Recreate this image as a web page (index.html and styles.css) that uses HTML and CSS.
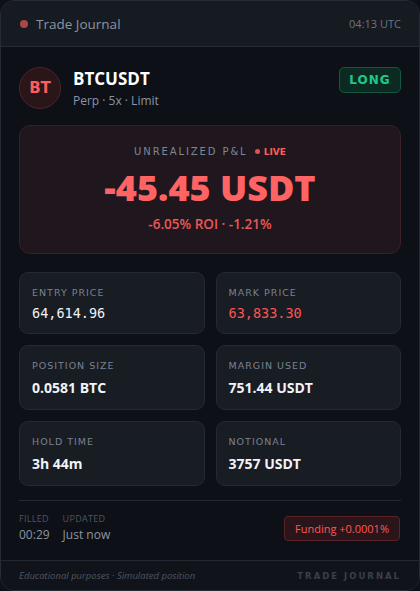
FILE: index.html
```html
<!DOCTYPE html>
<html lang="en">
<head>
    <meta charset="UTF-8">
    <meta name="viewport" content="width=device-width, initial-scale=1.0">
    <title>Trade Journal</title>
    <link rel="stylesheet" href="styles.css">
</head>
<body>
    <div class="journal">
        <div class="topbar">
            <div class="brand"><span class="brand-dot"></span>Trade Journal</div>
            <div class="clock">04:13 UTC</div>
        </div>

        <div class="content">
            <div class="pair-row">
                <div class="pair">
                    <div class="avatar">BT</div>
                    <div>
                        <div class="symbol">BTCUSDT</div>
                        <div class="meta">Perp · 5x · Limit</div>
                    </div>
                </div>
                <div class="side">LONG</div>
            </div>

            <div class="pnl">
                <div class="pnl-label">UNREALIZED P&amp;L <span class="live"><span class="live-dot"></span>LIVE</span></div>
                <div class="pnl-value">-45.45 USDT</div>
                <div class="pnl-sub">-6.05% ROI · -1.21%</div>
            </div>

            <div class="stats">
                <div class="stat">
                    <div class="stat-label">ENTRY PRICE</div>
                    <div class="stat-value mono">64,614.96</div>
                </div>
                <div class="stat">
                    <div class="stat-label">MARK PRICE</div>
                    <div class="stat-value mono down">63,833.30</div>
                </div>
                <div class="stat">
                    <div class="stat-label">POSITION SIZE</div>
                    <div class="stat-value">0.0581 BTC</div>
                </div>
                <div class="stat">
                    <div class="stat-label">MARGIN USED</div>
                    <div class="stat-value">751.44 USDT</div>
                </div>
                <div class="stat">
                    <div class="stat-label">HOLD TIME</div>
                    <div class="stat-value">3h 44m</div>
                </div>
                <div class="stat">
                    <div class="stat-label">NOTIONAL</div>
                    <div class="stat-value">3757 USDT</div>
                </div>
            </div>

            <div class="times">
                <div class="time-list">
                    <div>
                        <div class="time-label">FILLED</div>
                        <div class="time-value">00:29</div>
                    </div>
                    <div>
                        <div class="time-label">UPDATED</div>
                        <div class="time-value">Just now</div>
                    </div>
                </div>
                <div class="funding">Funding +0.0001%</div>
            </div>
        </div>

        <div class="bottombar">
            <div class="disclaimer">Educational purposes · Simulated position</div>
            <div class="mark">TRADE JOURNAL</div>
        </div>
    </div>
</body>
</html>
```

FILE: styles.css
```css
body {
    margin: 0;
    background-color: #0d1017;
    font-family: "Open Sans", "Noto Sans", sans-serif;
    color: #e8ecf1;
}
.journal {
    height: 589px;
    border: 1px solid #262b34;
    border-radius: 14px;
    overflow: hidden;
    background-color: #0d1017;
    display: flex;
    flex-direction: column;
}
.topbar {
    height: 45px;
    padding: 0 18px 0 19px;
    background-color: #161a21;
    border-bottom: 1px solid #252a33;
    display: flex;
    align-items: center;
    justify-content: space-between;
}
.brand {
    display: flex;
    align-items: center;
    font-size: 13.5px;
    color: #8c94a1;
}
.brand-dot {
    width: 8px;
    height: 8px;
    border-radius: 50%;
    background-color: #a84848;
    margin-right: 8px;
}
.clock {
    font-size: 11px;
    color: #6c7480;
}
.content {
    flex: 1;
    padding: 20px 18px 0 18px;
}
.pair-row {
    display: flex;
    justify-content: space-between;
    align-items: flex-start;
}
.pair {
    display: flex;
    align-items: center;
}
.avatar {
    width: 40px;
    height: 40px;
    border-radius: 50%;
    background-color: #2a1519;
    border: 1px solid #4b2629;
    color: #ff5c5c;
    font-family: "DejaVu Sans", sans-serif;
    font-weight: bold;
    font-size: 15px;
    display: flex;
    align-items: center;
    justify-content: center;
    margin-right: 12px;
}
.symbol {
    font-size: 17px;
    font-weight: 700;
    color: #ffffff;
    line-height: 22px;
}
.meta {
    font-size: 12px;
    color: #8c94a1;
    margin-top: 2px;
}
.side {
    width: 60px;
    height: 24px;
    border: 1px solid #14573f;
    background-color: #0b2b22;
    border-radius: 5px;
    color: #1fc88a;
    font-family: "DejaVu Sans", sans-serif;
    font-weight: bold;
    font-size: 12px;
    letter-spacing: 1px;
    display: flex;
    align-items: center;
    justify-content: center;
}
.pnl {
    margin-top: 16px;
    height: 129px;
    border: 1px solid #3a2026;
    border-radius: 11px;
    background-color: #1f171d;
    text-align: center;
    box-sizing: border-box;
    padding-top: 19px;
}
.pnl-label {
    font-family: "DejaVu Sans", sans-serif;
    font-size: 10px;
    letter-spacing: 1.9px;
    color: #7d8796;
    line-height: 14px;
}
.live {
    letter-spacing: 0;
    color: #ff5c5c;
    font-weight: bold;
    font-size: 9px;
    margin-left: 2px;
}
.live-dot {
    display: inline-block;
    width: 5px;
    height: 5px;
    border-radius: 50%;
    background-color: #e05353;
    margin-right: 4px;
    vertical-align: 1px;
}
.pnl-value {
    font-size: 36px;
    font-weight: 800;
    color: #ff6363;
    line-height: 44px;
    margin-top: 7px;
}
.pnl-sub {
    font-size: 13.5px;
    font-weight: 600;
    color: #ea5757;
    margin-top: 5px;
}
.stats {
    margin-top: 18px;
    display: grid;
    grid-template-columns: 1fr 1fr;
    gap: 11px;
}
.stat {
    border: 1px solid #242932;
    border-radius: 9px;
    background-color: #181c23;
    padding: 13px 12px 12px 12px;
}
.stat-label {
    font-family: "DejaVu Sans", sans-serif;
    font-size: 9.5px;
    letter-spacing: 1px;
    color: #7a8290;
    line-height: 14px;
}
.stat-value {
    margin-top: 6px;
    font-size: 14px;
    font-weight: 700;
    color: #f0f3f7;
    line-height: 18px;
}
.mono {
    font-family: "DejaVu Sans Mono", monospace;
    font-weight: normal;
    font-size: 13.5px;
    line-height: 16px;
    margin-top: 5px;
}
.down {
    color: #ff5252;
}
.times {
    margin-top: 14px;
    border-top: 1px solid #232831;
    padding-top: 12px;
    display: flex;
    justify-content: space-between;
    align-items: center;
}
.time-list {
    display: flex;
    gap: 13px;
}
.time-label {
    font-size: 9px;
    line-height: 12px;
    color: #4f5662;
    letter-spacing: 0.3px;
}
.time-value {
    font-size: 12px;
    line-height: 16px;
    color: #8c94a1;
    margin-top: 2px;
}
.funding {
    border: 1px solid #5a2328;
    background-color: #29151a;
    border-radius: 4px;
    color: #ff5757;
    font-size: 11px;
    line-height: 15px;
    padding: 4px 10px;
    margin-right: 1px;
}
.bottombar {
    height: 29px;
    border-top: 1px solid #232831;
    background-color: #10131a;
    padding: 0 18px;
    display: flex;
    align-items: center;
    justify-content: space-between;
}
.disclaimer {
    font-size: 9.5px;
    font-style: italic;
    color: #4f5662;
}
.mark {
    font-family: "DejaVu Sans", sans-serif;
    font-weight: bold;
    font-size: 8.5px;
    letter-spacing: 2px;
    color: #39404a;
}
```
